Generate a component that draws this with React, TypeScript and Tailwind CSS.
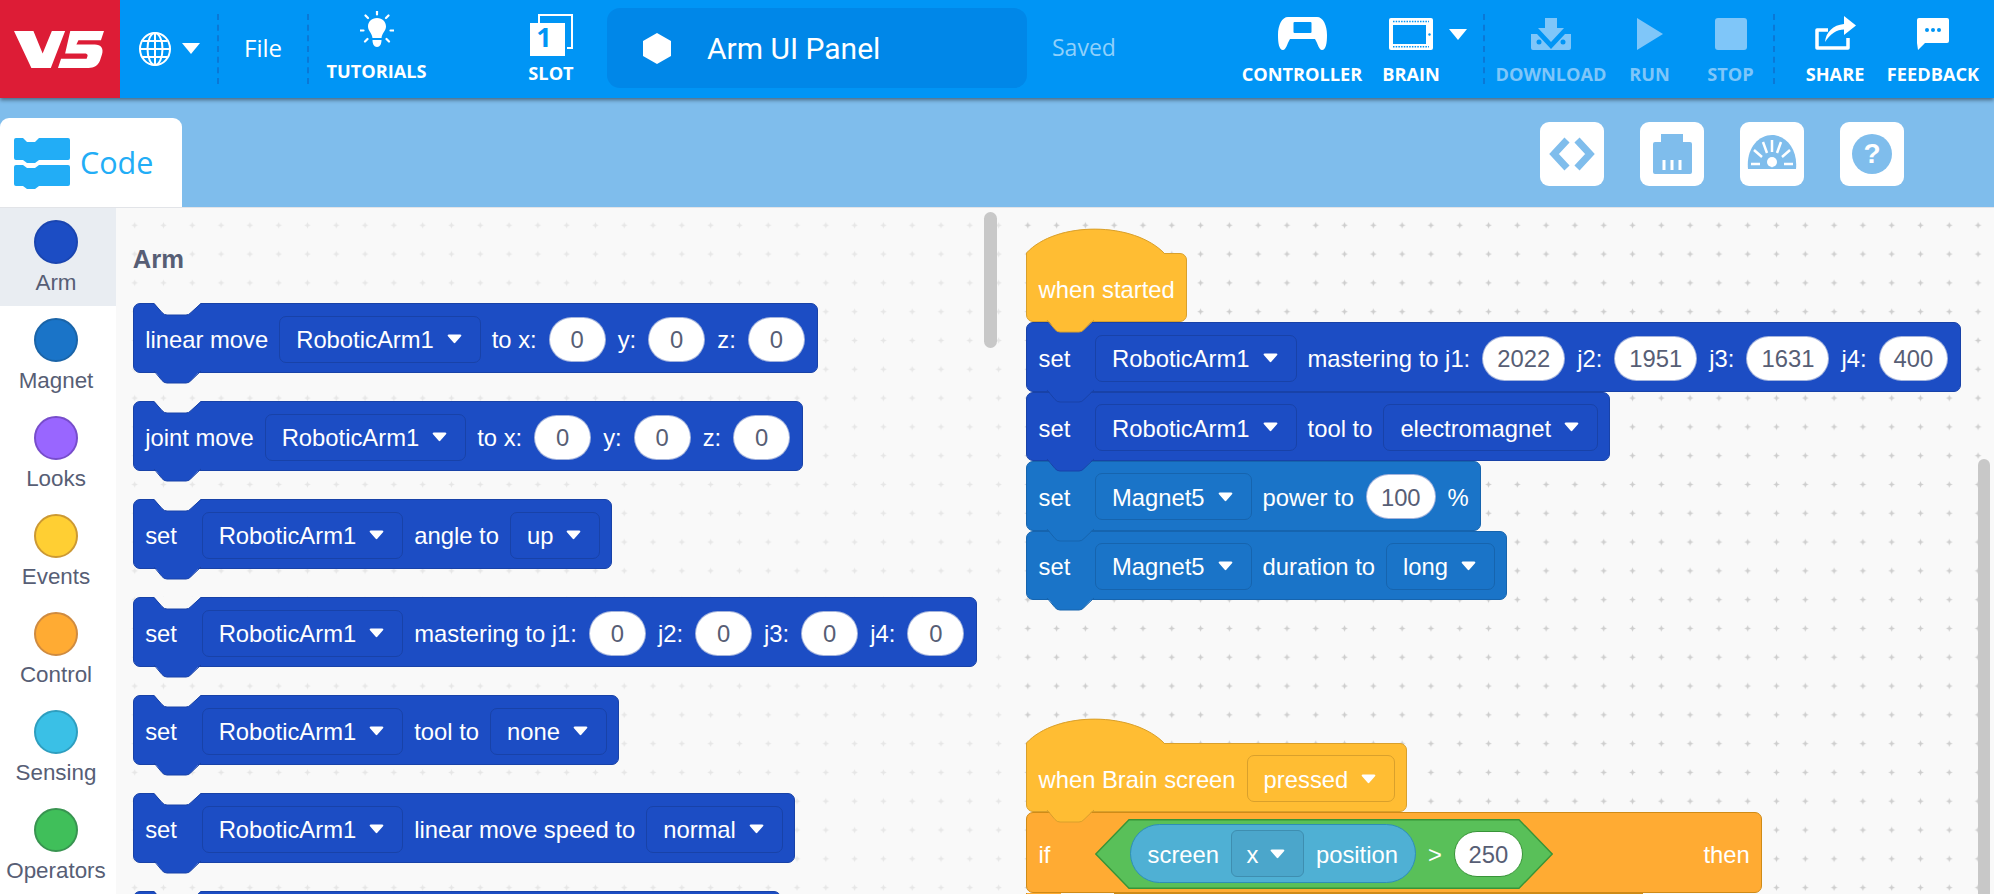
import React from "react";

type Tone = { box: string; fill: string; stroke: string };
const ARM: Tone = { box: "bg-[#1c4dc4] border-[#1842a8]", fill: "#1c4dc4", stroke: "#1842a8" };
const MAG: Tone = { box: "bg-[#1a74c8] border-[#1664ae]", fill: "#1a74c8", stroke: "#1664ae" };
const EVT: Tone = { box: "bg-[#ffbd33] border-[#d9a02c]", fill: "#ffbd33", stroke: "#d9a02c" };
const CTL: Tone = { box: "bg-[#ffab33] border-[#cf8b17]", fill: "#ffab33", stroke: "#cf8b17" };

function Caret({ className = "" }: { className?: string }) {
  return (
    <svg viewBox="0 0 15 10" className={"w-[15px] h-[10px] shrink-0 " + className}>
      <path d="M1.8 0.5H13.2Q15 0.5 14.2 2L8.5 8.6Q7.5 9.8 6.500 8.6L0.8 2Q0 0.5 1.8 0.5Z" fill="#fff" />
    </svg>
  );
}

function T({ children }: { children: React.ReactNode }) {
  return <span className="pt-[2px] whitespace-nowrap">{children}</span>;
}

function Drop({ label, border }: { label: string; border: string }) {
  return (
    <div className={"flex items-center gap-[13px] h-[47px] pl-[16px] pr-[18px] rounded-[7px] border-[1.5px] whitespace-nowrap " + border}>
      <T>{label}</T>
      <Caret />
    </div>
  );
}

function Num({ value }: { value: string }) {
  return (
    <div className="flex items-center justify-center h-[45px] min-w-[57px] px-[14px] mx-[1px] rounded-full bg-white text-[#575e75] border border-[#1842a8]/40 whitespace-nowrap">
      <T>{value}</T>
    </div>
  );
}

function Set({ children }: { children?: React.ReactNode }) {
  return <span className="w-[45.5px] pt-[2px] shrink-0 whitespace-nowrap">{children ?? "set"}</span>;
}

function Notch({ stroke }: { stroke: string }) {
  return (
    <svg viewBox="0 0 72 14" className="absolute left-[-1px] top-[-1px] w-[72px] h-[14px] overflow-visible">
      <path d="M21 0L29 9.500Q31 12 34 12H53Q56 12 58 9.500L68 0Z" fill="#f9f9f9" />
      <path d="M21 0.500L29 9.500Q31 12 34 12H53Q56 12 58 9.500L68 0.500" fill="none" stroke={stroke} strokeWidth="1" />
    </svg>
  );
}

function Tab({ tone }: { tone: Tone }) {
  return (
    <svg viewBox="0 0 72 14" className="absolute left-[-1px] top-full mt-[-1px] w-[72px] h-[14px] z-10 overflow-visible">
      <path d="M21 -1L29 9.500Q31 12 34 12H53Q56 12 58 9.500L68 -1Z" fill={tone.fill} />
      <path d="M21 0L29 9.500Q31 12 34 12H53Q56 12 58 9.500L68 0" fill="none" stroke={tone.stroke} strokeWidth="1" />
    </svg>
  );
}

function Block({
  tone,
  stacked,
  children,
  hat,
  noTab,
  height = "h-[70px]",
}: {
  tone: Tone;
  stacked?: boolean;
  children: React.ReactNode;
  hat?: boolean;
  noTab?: boolean;
  height?: string;
}) {
  return (
    <div
      className={
        "relative w-fit flex items-center gap-[11px] pl-[11.5px] pr-[11px] pt-[2px] border text-white text-[23.8px] " +
        (hat ? "rounded-b-[7px] rounded-tr-[7px] " : "rounded-[7px] ") +
        height +
        " " +
        tone.box
      }
    >
      {hat ? (
        <svg viewBox="0 0 140 27" className="absolute left-[-1px] bottom-full mb-[-2px] w-[140px] h-[27px] overflow-visible">
          <path d="M0.5 27V24C30 -8 108 -8 139 25L139 27Z" fill={tone.fill} />
          <path d="M0.5 27V24C30 -8 108 -8 139 25" fill="none" stroke={tone.stroke} strokeWidth="1" />
        </svg>
      ) : null}
      {!hat && !stacked ? <Notch stroke={tone.stroke} /> : null}
      {children}
      {!noTab ? <Tab tone={tone} /> : null}
    </div>
  );
}

function Category({ name, circle, active }: { name: string; circle: string; active?: boolean }) {
  return (
    <div className={"h-[98px] pt-[12px] pr-[4px] flex flex-col items-center " + (active ? "bg-[#e9edf2]" : "")}>
      <div className={"w-[44px] h-[44px] rounded-full border-2 " + circle} />
      <div className="mt-[5px] text-[22.4px] leading-[28px] text-[#575e75]">{name}</div>
    </div>
  );
}

function Sep() {
  return <div className="w-0 h-[70px] mt-[14px] border-l-2 border-dashed border-[#0a78d6] shrink-0" />;
}

function Tool({
  label,
  icon,
  width,
  dim,
  className = "",
}: {
  label: string;
  icon: React.ReactNode;
  width: string;
  dim?: boolean;
  className?: string;
}) {
  return (
    <div className={"flex flex-col items-center pt-[14px] shrink-0 " + width + " " + className}>
      <div className="h-[36px] flex items-end justify-center">{icon}</div>
      <div
        className={
          "mt-[12px] text-[18.2px] leading-[24px] font-bold whitespace-nowrap font-['Open_Sans',sans-serif] " +
          (dim ? "text-[#7fc6f9]" : "text-white")
        }
      >
        {label}
      </div>
    </div>
  );
}

function Logo() {
  return (
    <svg viewBox="0 0 88 36" className="w-[90px] h-[37px]">
      <path d="M0 0H19L28 22L37 0H50L36 36H17Z" fill="#fff" />
      <path
        d="M55 0H88L85 9H63L61 13H79C85 13 88 17 86 23L84 29C82 34 78 36 73 36H43L46 27H71L72 24C72 23 71 22 70 22H50Z"
        fill="#fff"
      />
    </svg>
  );
}

function Globe() {
  return (
    <svg viewBox="0 0 32 34" className="w-[32px] h-[34px]" fill="none" stroke="#fff" strokeWidth="2">
      <ellipse cx="16" cy="17" rx="15" ry="16" />
      <ellipse cx="16" cy="17" rx="7.500" ry="16" />
      <path d="M16 1V33M1 17H31M3.500 9H28.500M3.500 25H28.500" />
    </svg>
  );
}

function HeadCaret() {
  return (
    <svg viewBox="0 0 18 11" className="w-[18px] h-[11px] shrink-0">
      <path d="M0 0H18L9 11Z" fill="#fff" />
    </svg>
  );
}

function Bulb() {
  return (
    <svg viewBox="0 0 34 36" className="w-[34px] h-[36px]">
      <path d="M17 7C11.500 7 8 11 8 15.500C8 20 12 22 12.500 27H21.500C22 22 26 20 26 15.500C26 11 22.500 7 17 7Z" fill="#fff" />
      <path d="M12.500 29H21.500C21.500 33 20 36 17 36C14 36 12.500 33 12.500 29Z" fill="#fff" />
      <path
        d="M17 0V4M5.500 5L8 7.500M28.500 5L26 7.500M0 20H3.500M30.500 20H34M5 31L7.500 28.500M29 31L26.500 28.500"
        stroke="#fff"
        strokeWidth="2.200"
        strokeLinecap="round"
        transform="translate(0 -0.500)"
      />
    </svg>
  );
}

function Slot() {
  return (
    <svg viewBox="0 0 43 42" className="w-[43px] h-[42px]">
      <rect x="9" y="1" width="33" height="33" fill="none" stroke="#fff" strokeWidth="2" />
      <path d="M35 9H37V36H35Z" fill="#0095f5" />
      <rect x="0" y="9" width="35" height="33" fill="#fff" />
      <text x="14" y="33" textAnchor="middle" fontSize="27" fontWeight="700" fill="#0095f5" fontFamily="Open Sans, sans-serif">
        1
      </text>
    </svg>
  );
}

function Controller() {
  return (
    <svg viewBox="0 0 49 33" className="w-[49px] h-[33px]">
      <path d="M10 0H39C45 0 49 8 49 18C49 26 48 33 44 33C41 33 40 27 37 22H12C9 27 8 33 5 33C1 33 0 26 0 18C0 8 4 0 10 0Z" fill="#fff" />
      <rect x="15.500" y="5" width="18" height="11" rx="1" fill="#0095f5" />
    </svg>
  );
}

function Brain() {
  return (
    <svg viewBox="0 0 44 32" className="w-[44px] h-[32px]">
      <rect width="44" height="32" rx="2" fill="#fff" />
      <rect x="4" y="7" width="33" height="19" fill="#0095f5" />
      <path d="M4 3.500H40M4 28.800H40" stroke="#0095f5" strokeWidth="1.500" strokeDasharray="1.500 1.200" />
      <circle cx="40.500" cy="16.500" r="1.200" fill="#0095f5" />
    </svg>
  );
}

function Download() {
  return (
    <svg viewBox="0 0 40 32" className="w-[40px] h-[32px]">
      <path d="M14 0H26V10H33L20 24L7 10H14Z" fill="#7fc6f9" />
      <path d="M0 16H6L20 31L34 16H40V30Q40 32 38 32H2Q0 32 0 30Z" fill="#7fc6f9" />
      <circle cx="8" cy="24" r="2.500" fill="#0095f5" />
      <circle cx="32" cy="24" r="2.500" fill="#0095f5" />
    </svg>
  );
}

function Share() {
  return (
    <svg viewBox="0 0 42 36" className="w-[42px] h-[36px]">
      <path d="M14 16H3V34H34V24" fill="none" stroke="#fff" strokeWidth="3.500" strokeLinejoin="round" />
      <path d="M11 28C12 18 19 11 30 10V2L42 11.500L30 21V15.500C23 15.500 16 20 11 28Z" fill="#fff" />
    </svg>
  );
}

function Feedback() {
  return (
    <svg viewBox="0 0 32 32" className="w-[32px] h-[32px]">
      <path d="M2 0H30Q32 0 32 2V23Q32 25 30 25H8L1 32L0 25V2Q0 0 2 0Z" fill="#fff" />
      <circle cx="10" cy="12" r="2" fill="#0095f5" />
      <circle cx="16" cy="12" r="2" fill="#0095f5" />
      <circle cx="22" cy="12" r="2" fill="#0095f5" />
    </svg>
  );
}

function CodeBlocks() {
  return (
    <svg viewBox="0 0 56 51" className="w-[56px] h-[51px]">
      <path d="M2 0H9L13 4H21L25 0H54Q56 0 56 2V20Q56 22 54 22H25L21 25H13L9 22H2Q0 22 0 20V2Q0 0 2 0Z" fill="#22adf6" />
      <path d="M2 27H9L13 30H21L25 27H54Q56 27 56 29V46Q56 48 54 48H25L21 51H13L9 48H2Q0 48 0 46V29Q0 27 2 27Z" fill="#22adf6" />
    </svg>
  );
}

function SideBtn({ children }: { children: React.ReactNode }) {
  return <div className="w-[64px] h-[64px] rounded-[9px] bg-white flex items-center justify-center">{children}</div>;
}

const ROBOT = "RoboticArm1";
const DB = "border-[#1842a8]";
const DM = "border-[#1664ae]";

export default function App() {
  return (
    <div className="w-[1994px] h-[894px] overflow-hidden flex flex-col bg-[#f9f9f9] font-['Liberation_Sans',Arial,sans-serif]">
      <header className="relative z-20 h-[98px] shrink-0 flex bg-[#0095f5] shadow-[0_2px_4px_rgba(0,0,0,0.45)] text-white">
        <div className="w-[120px] shrink-0 bg-[#dd1c36] flex items-center justify-center pr-[2px]">
          <Logo />
        </div>
        <div className="w-[97px] shrink-0 flex items-center pl-[19px] gap-[11px] pb-[1px]">
          <Globe />
          <HeadCaret />
        </div>
        <Sep />
        <div className="w-[88px] shrink-0 flex items-center justify-center font-['Open_Sans',sans-serif] text-[24px] pb-[3px]">File</div>
        <Sep />
        <Tool label="TUTORIALS" icon={<Bulb />} width="w-[135px]" className="mt-[-3px]" />
        <div className="w-[51px] shrink-0" />
        <div className="w-[112px] shrink-0 flex flex-col items-center pt-[14px]">
          <Slot />
          <div className="mt-[5px] text-[18.2px] leading-[24px] font-bold font-['Open_Sans',sans-serif]">SLOT</div>
        </div>
        <div className="w-[420px] shrink-0 h-[80px] mt-[8px] rounded-[13px] bg-[#0087e8] flex items-center pl-[36px]">
          <svg viewBox="0 0 28 31" className="w-[28px] h-[31px]">
            <path d="M14 0L28 8V23L14 31L0 23V8Z" fill="#fff" />
          </svg>
          <span className="ml-[36px] text-[30px] font-['Roboto',sans-serif]">Arm UI Panel</span>
        </div>
        <div className="ml-[25px] self-center pb-[4px] text-[23px] text-[#8fd0fb] font-['Open_Sans',sans-serif]">Saved</div>
        <div className="ml-auto flex mr-[13px]">
          <Tool label="CONTROLLER" icon={<Controller />} width="w-[120px]" />
          <Tool label="BRAIN" icon={<Brain />} width="w-[80px]" className="ml-[9px] mr-[-2px]" />
          <div className="w-[18px] pt-[29px] mr-[16px] shrink-0">
            <HeadCaret />
          </div>
          <Sep />
          <Tool label="DOWNLOAD" dim icon={<Download />} width="w-[120px]" className="ml-[6px]" />
          <Tool
            label="RUN"
            dim
            icon={
              <svg viewBox="0 0 26 32" className="w-[26px] h-[32px]">
                <path d="M0 0L26 16L0 32Z" fill="#7fc6f9" />
              </svg>
            }
            width="w-[77px]"
          />
          <Tool label="STOP" dim icon={<div className="w-[32px] h-[32px] rounded-[3px] bg-[#7fc6f9]" />} width="w-[85px]" />
          <Sep />
          <Tool label="SHARE" icon={<Share />} width="w-[100px]" className="ml-[10px]" />
          <Tool label="FEEDBACK" icon={<Feedback />} width="w-[96px]" />
        </div>
      </header>

      <div className="h-[110px] shrink-0 flex justify-between bg-[#7fbdec] border-b border-[#e2e4e8]">
        <div className="self-end w-[182px] h-[89px] rounded-t-[9px] bg-white flex items-center pl-[14px] pt-[1px]">
          <CodeBlocks />
          <span className="ml-[10px] text-[30.5px] text-[#22adf6] font-['Open_Sans',sans-serif]">Code</span>
        </div>
        <div className="flex gap-[36px] pt-[24px] pr-[90px]">
          <SideBtn>
            <svg viewBox="0 0 64 64" className="w-[64px] h-[64px]" fill="none" stroke="#7fbdec" strokeWidth="7">
              <path d="M27 18L14 32L27 46M37 18L50 32L37 46" />
            </svg>
          </SideBtn>
          <SideBtn>
            <svg viewBox="0 0 64 64" className="w-[64px] h-[64px]">
              <path d="M21 12H43V20H50Q52 20 52 22V50Q52 52 50 52H15Q13 52 13 50V22Q13 20 15 20H21Z" fill="#7fbdec" />
              <path d="M24 38V48M32 38V48M40 38V48" stroke="#fff" strokeWidth="3" />
            </svg>
          </SideBtn>
          <SideBtn>
            <svg viewBox="0 0 64 64" className="w-[64px] h-[64px]">
              <path d="M8 47C6 27 18 13 32 13C46 13 58 27 56 47Z" fill="#7fbdec" />
              <path d="M32 18V30M23 20L27 31M41 20L37 31M14 28L22 35M50 28L42 35M11 42H20M44 42H53" stroke="#fff" strokeWidth="2.500" />
              <circle cx="32" cy="40" r="5" fill="#fff" />
              <path d="M29 36L32 46L35 36Z" fill="#fff" />
            </svg>
          </SideBtn>
          <SideBtn>
            <div className="w-[40px] h-[40px] rounded-full bg-[#7fbdec] text-white font-bold text-[28px] flex items-center justify-center">?</div>
          </SideBtn>
        </div>
      </div>

      <main className="flex-1 min-h-0 flex">
        <nav className="w-[116px] shrink-0 bg-white">
          <Category name="Arm" circle="bg-[#1c4dc4] border-[#1a45b0]" active />
          <Category name="Magnet" circle="bg-[#1a74c8] border-[#1a64a8]" />
          <Category name="Looks" circle="bg-[#9966ff] border-[#774dcb]" />
          <Category name="Events" circle="bg-[#ffcf33] border-[#cc9933]" />
          <Category name="Control" circle="bg-[#ffab33] border-[#cf8b40]" />
          <Category name="Sensing" circle="bg-[#3ac0e6] border-[#2e9ebf]" />
          <Category name="Operators" circle="bg-[#40bf5a] border-[#389450]" />
        </nav>

        <section className="relative w-[897px] shrink-0 pl-[16.700px] pt-[35px] bg-[radial-gradient(ellipse_3.500px_1.300px_at_center,#e6e6e6_50%,transparent_100%),radial-gradient(ellipse_1.300px_3.500px_at_center,#e6e6e6_50%,transparent_100%)] bg-[length:28.800px_28.800px] bg-[position:4.300px_2.900px]">
          <h2 className="h-[32px] leading-[32px] text-[25.600px] font-bold text-[#575e75] mb-[28.300px]">Arm</h2>
          <div className="flex flex-col gap-[28px]">
            <Block tone={ARM}>
              <T>linear move</T>
              <Drop label={ROBOT} border={DB} />
              <T>to x:</T>
              <Num value="0" />
              <T>y:</T>
              <Num value="0" />
              <T>z:</T>
              <Num value="0" />
            </Block>
            <Block tone={ARM}>
              <T>joint move</T>
              <Drop label={ROBOT} border={DB} />
              <T>to x:</T>
              <Num value="0" />
              <T>y:</T>
              <Num value="0" />
              <T>z:</T>
              <Num value="0" />
            </Block>
            <Block tone={ARM}>
              <Set />
              <Drop label={ROBOT} border={DB} />
              <T>angle to</T>
              <Drop label="up" border={DB} />
            </Block>
            <Block tone={ARM}>
              <Set />
              <Drop label={ROBOT} border={DB} />
              <T>mastering to j1:</T>
              <Num value="0" />
              <T>j2:</T>
              <Num value="0" />
              <T>j3:</T>
              <Num value="0" />
              <T>j4:</T>
              <Num value="0" />
            </Block>
            <Block tone={ARM}>
              <Set />
              <Drop label={ROBOT} border={DB} />
              <T>tool to</T>
              <Drop label="none" border={DB} />
            </Block>
            <Block tone={ARM}>
              <Set />
              <Drop label={ROBOT} border={DB} />
              <T>linear move speed to</T>
              <Drop label="normal" border={DB} />
            </Block>
            <Block tone={ARM}>
              <div className="w-[624px]" />
            </Block>
          </div>
          <div className="absolute z-10 left-[868px] top-[4px] w-[13px] h-[136px] rounded-full bg-[#c8c8c8]" />
        </section>

        <section className="relative flex-1 pl-[13px] pt-[45px] bg-[radial-gradient(ellipse_3.500px_1.300px_at_center,#cdcdcd_50%,transparent_100%),radial-gradient(ellipse_1.300px_3.500px_at_center,#cdcdcd_50%,transparent_100%)] bg-[length:28.800px_28.800px] bg-[position:0.400px_2.900px]">
          <div className="flex flex-col">
            <Block tone={EVT} hat height="h-[69.400px]">
              <T>when started</T>
            </Block>
            <Block tone={ARM} stacked height="h-[69.400px]">
              <Set />
              <Drop label={ROBOT} border={DB} />
              <T>mastering to j1:</T>
              <Num value="2022" />
              <T>j2:</T>
              <Num value="1951" />
              <T>j3:</T>
              <Num value="1631" />
              <T>j4:</T>
              <Num value="400" />
            </Block>
            <Block tone={ARM} stacked height="h-[69.400px]">
              <Set />
              <Drop label={ROBOT} border={DB} />
              <T>tool to</T>
              <Drop label="electromagnet" border={DB} />
            </Block>
            <Block tone={MAG} stacked height="h-[69.400px]">
              <Set />
              <Drop label="Magnet5" border={DM} />
              <T>power to</T>
              <Num value="100" />
              <T>%</T>
            </Block>
            <Block tone={MAG} stacked height="h-[69.400px]">
              <Set />
              <Drop label="Magnet5" border={DM} />
              <T>duration to</T>
              <Drop label="long" border={DM} />
            </Block>
          </div>

          <div className="mt-[143px] flex flex-col">
            <Block tone={EVT} hat height="h-[69.400px]">
              <T>when Brain screen</T>
              <Drop label="pressed" border="border-[#d9a02c]" />
            </Block>
            <Block tone={CTL} stacked noTab height="h-[80.500px]">
              <Set>if</Set>
              <div className="relative w-[458px] h-[70px] flex items-center pl-[34.600px]">
                <svg viewBox="0 0 458 70" className="absolute left-0 top-0 w-[458px] h-[70px]">
                  <path d="M0.800 35L34 0.700H424L457.200 35L424 69.300H34Z" fill="#59c059" stroke="#389438" strokeWidth="1.400" />
                </svg>
                <div className="relative flex items-center gap-[11.5px] h-[59px] pl-[17px] pr-[17px] rounded-full bg-[#4fb0d4] border border-[#2e8eb8]">
                  <T>screen</T>
                  <div className="flex items-center gap-[12px] h-[47px] pl-[15px] pr-[18px] rounded-[6px] bg-[#4ba6cb] border-[1.500px] border-[#3e8eb0]">
                    <T>x</T>
                    <Caret />
                  </div>
                  <T>position</T>
                </div>
                <span className="relative ml-[12px] pt-[2px]">&gt;</span>
                <div className="relative ml-[12px] w-[69px] h-[46px] rounded-full bg-white text-[#575e75] border border-[#389438] flex items-center justify-center">
                  <T>250</T>
                </div>
              </div>
              <span className="ml-[139.5px] pt-[2px]">then</span>
            </Block>
            <div className="flex h-[4px]">
              <div className="w-[35px] bg-[#ffab33] border-l border-[#cf8b17]" />
              <div className="ml-[53px] w-[529px] h-[2px] bg-[#cf8b17]" />
            </div>
          </div>

          <div className="absolute right-[4px] top-[251px] bottom-0 w-[12px] rounded-t-full bg-[#c8c8c8]" />
        </section>
      </main>
    </div>
  );
}
